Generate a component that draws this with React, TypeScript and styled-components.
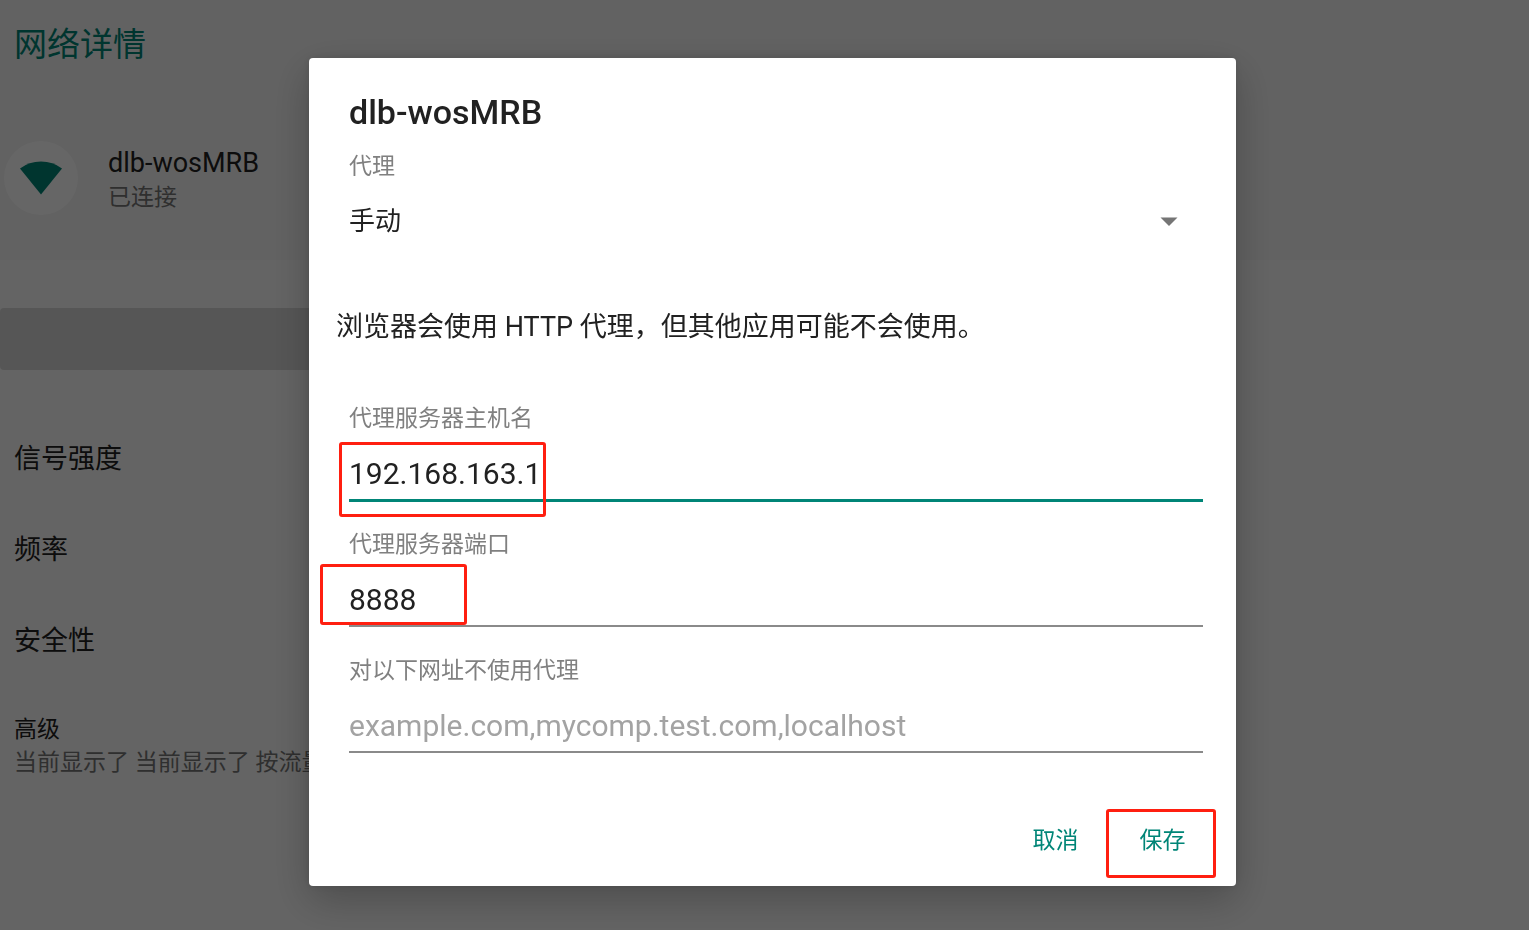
import React from "react";
import styled, { createGlobalStyle } from "styled-components";

const GlobalStyle = createGlobalStyle`
  * { box-sizing: border-box; }
  body {
    margin: 0;
    background: #fafafa;
    color: #212121;
    font-family: Roboto, "Noto Sans CJK SC", sans-serif;
  }
`;

const Page = styled.main`
  min-height: 100vh;
  overflow: hidden;
`;

const Header = styled.header`
  height: 260px;
  background: #f5f5f5;
`;

const PageTitle = styled.h1`
  margin: 0;
  padding: 21px 14px 0;
  font-size: 33px;
  font-weight: 400;
  line-height: 48px;
  color: #008577;
`;

const Network = styled.section`
  display: flex;
  align-items: center;
  gap: 30px;
  padding: 72px 4px 0;
`;

const NetworkText = styled.div`
  padding-top: 4px;
`;

const Avatar = styled.div`
  display: flex;
  align-items: center;
  justify-content: center;
  width: 74px;
  height: 74px;
  border-radius: 50%;
  background: #fff;
`;

const Name = styled.div`
  font-size: 27px;
  line-height: 36px;
`;

const Secondary = styled.div`
  font-size: 23px;
  line-height: 34px;
  color: #757575;
`;

const ForgetButton = styled.button`
  display: block;
  width: 50%;
  height: 62px;
  margin-top: 48px;
  border: 0;
  border-radius: 4px;
  background: #d7d7d7;
`;

const Details = styled.ul`
  list-style: none;
  margin: 41px 0 0;
  padding: 0 14px;
`;

const Detail = styled.li`
  display: flex;
  align-items: center;
  height: 91px;
  font-size: 27px;
`;

const Advanced = styled.section`
  padding: 30px 14px 0;
  font-size: 23px;
  line-height: 32px;
`;

const Scrim = styled.div`
  position: fixed;
  inset: 0;
  padding: 58px 293px 44px 309px;
  background: rgba(0, 0, 0, 0.6);
`;

const Dialog = styled.form`
  padding: 30px 33px 9px 40px;
  border-radius: 4px;
  background: #fff;
  box-shadow: 0 14px 40px rgba(0, 0, 0, 0.24), 0 0 8px rgba(0, 0, 0, 0.12);
`;

const DialogTitle = styled.h2`
  margin: 0 0 15px;
  font-size: 34px;
  font-weight: 500;
  line-height: 48px;
`;

const Field = styled.div`
  position: relative;
  height: 126px;
`;

const Label = styled.label`
  display: block;
  font-size: 23px;
  line-height: 32px;
  color: #808080;
`;

const SelectRow = styled.div`
  display: flex;
  align-items: center;
  margin-top: 14px;
  padding-right: 25px;
`;

const Select = styled.select`
  flex: 1;
  height: 48px;
  margin-right: -18px;
  padding: 0;
  border: 0;
  outline: 0;
  appearance: none;
  background: transparent;
  color: #212121;
  font: inherit;
  font-size: 26px;
`;

const Arrow = styled.svg`
  pointer-events: none;
`;

const Notice = styled.p`
  margin: 30px 0 56px -13px;
  font-size: 27px;
  line-height: 40px;
`;

const Input = styled.input<{ $active?: boolean }>`
  display: block;
  width: 100%;
  height: ${(p) => (p.$active ? 67 : 66)}px;
  padding: 16px 0 4px;
  border: 0;
  border-bottom: ${(p) => (p.$active ? "3px solid #008577" : "2px solid #8a8a8a")};
  border-radius: 0;
  outline: 0;
  background: transparent;
  color: #212121;
  font: inherit;
  font-size: 30px;
  &::placeholder {
    color: #a3a3a3;
    opacity: 1;
  }
`;

const Actions = styled.div`
  display: flex;
  justify-content: flex-end;
  margin: 26px -13px 0 0;
`;

const Action = styled.button`
  position: relative;
  width: 107px;
  height: 70px;
  padding: 0 0 8px;
  border: 0;
  background: transparent;
  color: #008577;
  font: inherit;
  font-size: 23px;
`;

/* Red outline that calls attention to a control */
const Highlight = styled.span<{ $x: number; $y: number; $w: number; $h: number }>`
  position: absolute;
  left: ${(p) => p.$x}px;
  top: ${(p) => p.$y}px;
  width: ${(p) => p.$w}px;
  height: ${(p) => p.$h}px;
  border: 3px solid #ff1f10;
  border-radius: 3px;
  pointer-events: none;
`;

export default function App() {
  return (
    <>
      <GlobalStyle />
      <Page>
        <Header>
          <PageTitle>网络详情</PageTitle>
          <Network>
            <Avatar>
              <svg width="42" height="34" viewBox="0 0 42 34" aria-hidden="true">
                <path d="M0 7.5Q9 .5 21 .5T42 7.5L21 33.5Z" fill="#008577" />
              </svg>
            </Avatar>
            <NetworkText>
              <Name>dlb-wosMRB</Name>
              <Secondary>已连接</Secondary>
            </NetworkText>
          </Network>
        </Header>
        <ForgetButton type="button" />
        <Details>
          <Detail>信号强度</Detail>
          <Detail>频率</Detail>
          <Detail>安全性</Detail>
        </Details>
        <Advanced>
          <div>高级</div>
          <Secondary>当前显示了 当前显示了 按流量</Secondary>
        </Advanced>
      </Page>
      <Scrim>
        <Dialog role="dialog" aria-labelledby="title" onSubmit={(e) => e.preventDefault()}>
          <DialogTitle id="title">dlb-wosMRB</DialogTitle>
          <Field>
            <Label htmlFor="proxy">代理</Label>
            <SelectRow>
              <Select id="proxy" defaultValue="manual">
                <option value="manual">手动</option>
              </Select>
              <Arrow width="18" height="9" viewBox="0 0 18 9" aria-hidden="true">
                <path d="M.5 .5H17.5L9 9Z" fill="#757575" />
              </Arrow>
            </SelectRow>
          </Field>
          <Notice>浏览器会使用 HTTP 代理，但其他应用可能不会使用。</Notice>
          <Field>
            <Label htmlFor="host">代理服务器主机名</Label>
            <Input id="host" $active defaultValue="192.168.163.1" />
            <Highlight $x={-10} $y={39} $w={207} $h={75} />
          </Field>
          <Field>
            <Label htmlFor="port">代理服务器端口</Label>
            <Input id="port" defaultValue="8888" />
            <Highlight $x={-29} $y={35} $w={147} $h={61} />
          </Field>
          <Field>
            <Label htmlFor="bypass">对以下网址不使用代理</Label>
            <Input id="bypass" placeholder="example.com,mycomp.test.com,localhost" />
          </Field>
          <Actions>
            <Action type="button">取消</Action>
            <Action type="submit">
              保存
              <Highlight $x={-3} $y={2} $w={110} $h={69} />
            </Action>
          </Actions>
        </Dialog>
      </Scrim>
    </>
  );
}
